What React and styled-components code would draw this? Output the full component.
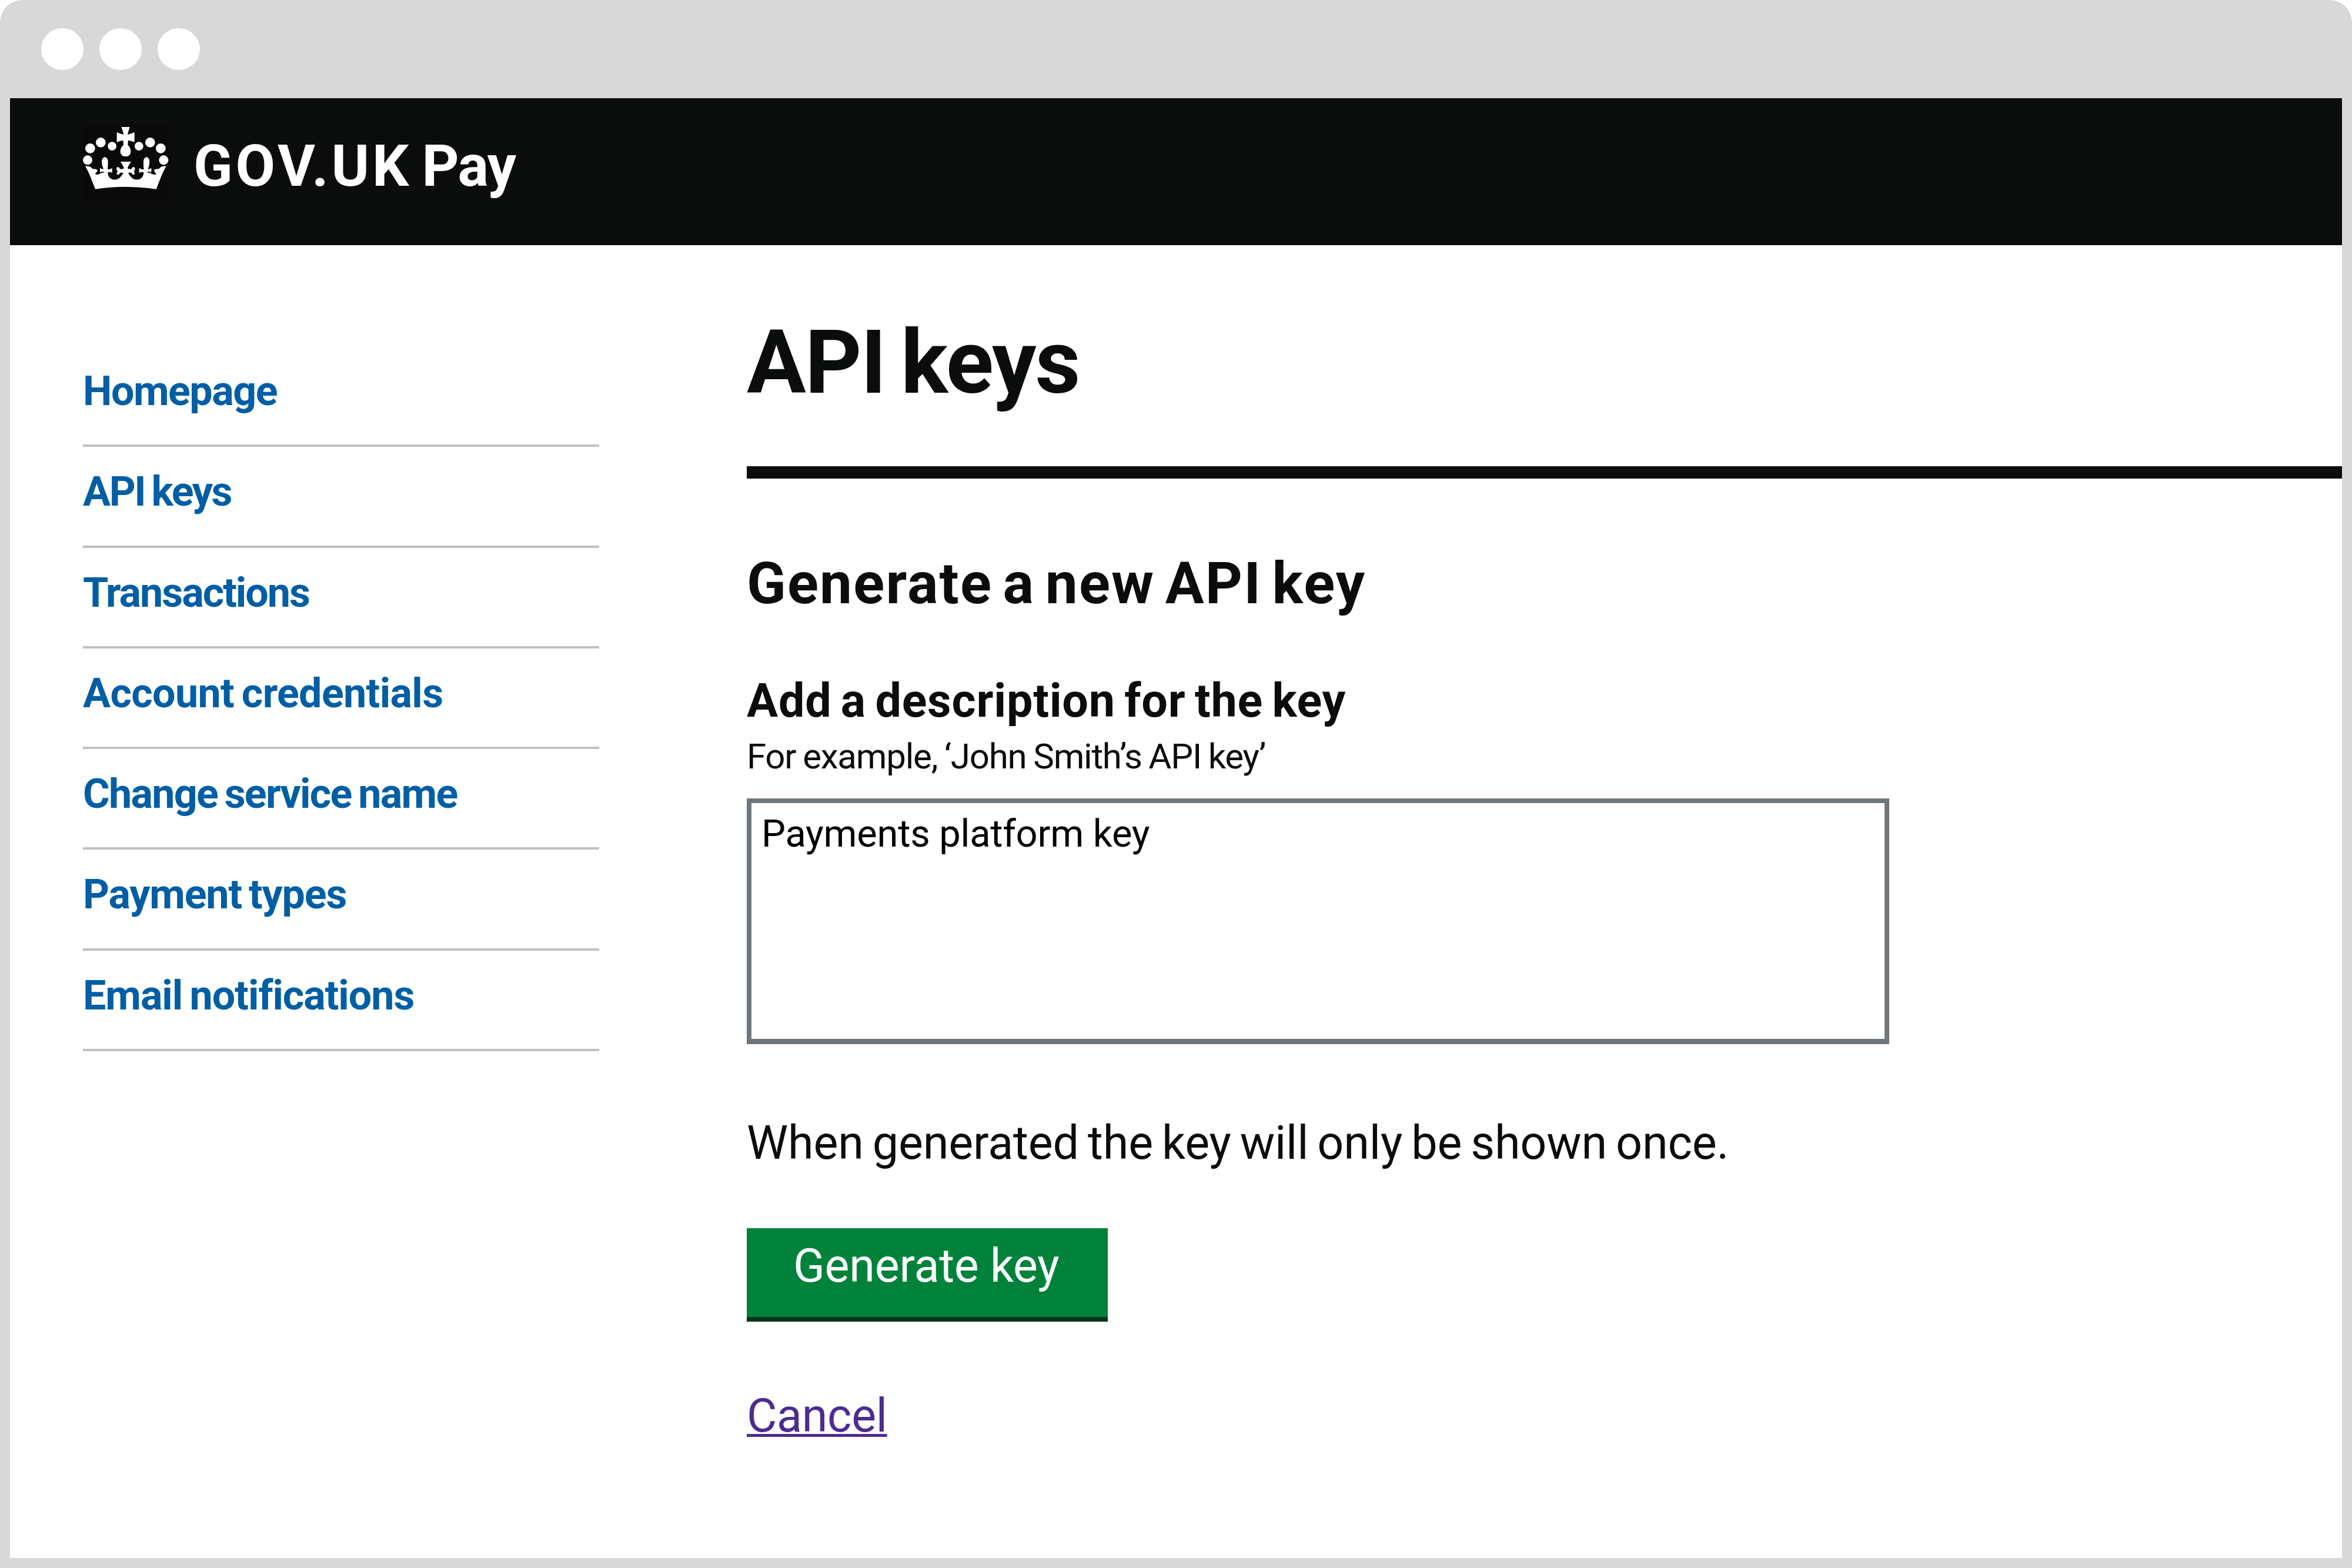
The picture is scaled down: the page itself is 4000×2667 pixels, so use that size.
import React from 'react';
import styled, { createGlobalStyle } from 'styled-components';

const ink = '#0b0c0c';

const GlobalStyle = createGlobalStyle`
  *, *::before, *::after { box-sizing: border-box; }
  body {
    margin: 0;
    background: #fff;
    color: ${ink};
    font-family: Roboto, "Liberation Sans", sans-serif;
    font-kerning: normal;
  }
  h1, h2, p, ul { margin: 0; padding: 0; }
`;

const Window = styled.div`
  display: flex;
  flex-direction: column;
  width: 4000px;
  height: 2667px;
  padding: 0 17px 17px;
  background: #d8d8d8;
  border-radius: 38px 38px 0 0;
  overflow: hidden;
`;

const TitleBar = styled.div`
  display: flex;
  gap: 27.5px;
  flex: none;
  height: 167px;
  padding: 47.5px 0 0 53px;
`;

const Dot = styled.span`
  width: 71.5px;
  height: 71.5px;
  border-radius: 50%;
  background: #fff;
`;

const Header = styled.header`
  display: flex;
  align-items: flex-start;
  gap: 42px;
  flex: none;
  height: 250px;
  padding: 45px 124px 0;
  background: ${ink};
`;

const CrownSvg = styled.svg`
  display: block;
  width: 146px;
  height: 130px;
  background: #0a0a0a;
`;

const ServiceName = styled.div`
  margin-top: 22px;
  font-size: 98px;
  line-height: 98px;
  font-weight: 700;
  word-spacing: -7px;
  white-space: nowrap;
  color: #fff;
`;

const Logotype = styled.span`
  letter-spacing: 4.8px;
`;

const ProductName = styled.span`
  letter-spacing: -1.5px;
`;

const Body = styled.div`
  display: flex;
  gap: 251px;
  flex: 1;
  padding-left: 124px;
  background: #fff;
`;

const NavList = styled.ul`
  flex: none;
  width: 878px;
  padding-top: 172px;
  list-style: none;
`;

const NavItem = styled.li`
  height: 171.3px;
  padding-top: 41px;
  border-bottom: 4px solid #bfc1c3;
`;

const NavLink = styled.a`
  display: block;
  font-size: 70px;
  line-height: 70px;
  font-weight: 700;
  letter-spacing: ${(p) => p.$tracking}px;
  word-spacing: -4px;
  white-space: nowrap;
  color: #005ea5;
  text-decoration: none;
`;

const Main = styled.main`
  flex: 1;
  display: flex;
  flex-direction: column;
  align-items: flex-start;
`;

const PageTitle = styled.h1`
  align-self: stretch;
  padding: 125px 0 101px;
  border-bottom: 21px solid ${ink};
  font-size: 150px;
  line-height: 150px;
  font-weight: 700;
  letter-spacing: -1.9px;
  word-spacing: -9px;
`;

const SectionTitle = styled.h2`
  margin-top: 130px;
  font-size: 98px;
  line-height: 98px;
  font-weight: 700;
  letter-spacing: 2.2px;
  word-spacing: -9px;
`;

const Label = styled.label`
  margin-top: 111px;
  font-size: 79px;
  line-height: 79px;
  font-weight: 700;
  letter-spacing: 0.8px;
  word-spacing: -5px;
`;

const Hint = styled.span`
  margin-top: 25px;
  font-size: 60px;
  line-height: 60px;
  letter-spacing: -1.2px;
  word-spacing: -2px;
`;

const Description = styled.textarea`
  display: block;
  width: 1943px;
  height: 418px;
  margin: 41px 0 0;
  padding: 20px 17px;
  border: 8px solid #6f777b;
  border-bottom-width: 9px;
  border-radius: 0;
  outline: none;
  resize: none;
  background: #fff;
  color: #000;
  font: 400 65px/65px Roboto, "Liberation Sans", sans-serif;
  letter-spacing: -0.25px;
`;

const Note = styled.p`
  margin-top: 129px;
  font-size: 79px;
  line-height: 79px;
  letter-spacing: -0.1px;
  word-spacing: -4.5px;
`;

const SubmitButton = styled.button`
  width: 614px;
  height: 159px;
  margin: 105px 0 0;
  padding: 25px 0 47px 79px;
  border: 0;
  border-bottom: 8px solid #003618;
  background: #00823b;
  color: #fff;
  font: 400 79px/79px Roboto, "Liberation Sans", sans-serif;
  letter-spacing: -0.2px;
  text-align: left;
  white-space: nowrap;
`;

const CancelLink = styled.a`
  margin-top: 121px;
  font-size: 79px;
  line-height: 79px;
  letter-spacing: -0.3px;
  color: #4c2c92;
  text-decoration: underline;
  text-decoration-thickness: 5px;
  text-underline-offset: 4px;
  text-decoration-skip-ink: none;
`;

const navItems = [
  { label: 'Homepage', tracking: -1.5 },
  { label: 'API keys', tracking: -2.4 },
  { label: 'Transactions', tracking: -2 },
  { label: 'Account credentials', tracking: -0.65 },
  { label: 'Change service name', tracking: -1.75 },
  { label: 'Payment types', tracking: -1.2 },
  { label: 'Email notifications', tracking: -1.05 },
];

const jewels = [
  [88, 247, 24], [101, 187, 25], [155, 157, 25], [213, 176, 22],
  [350, 176, 22], [407, 157, 25], [461, 187, 25], [476, 247, 24],
];

const Crown = () => (
  <CrownSvg viewBox="64 66 438 390" fill="#fff" aria-hidden="true">
    {jewels.map(([cx, cy, r]) => (
      <circle key={cx} cx={cx} cy={cy} r={r} />
    ))}
    {/* orb and cross */}
    <path d="M260 78 H303 Q296 98 292 117 Q312 112 327 105 V155 Q312 149 295 146 Q293 160 293 170 Q308 182 308 204 Q308 227 282 229 Q255 227 255 204 Q255 182 271 170 Q271 160 269 146 Q252 149 237 155 V105 Q252 112 272 117 Q268 98 260 78 Z" />
    {/* circlet with its side leaves, fleurs-de-lis and centre cross */}
    <path d="M76 278 Q104 276 113 292 Q128 290 139 298 Q136 310 126 317 Q136 324 150 317 Q164 309 176 311 Q162 300 151 311 V287 Q164 295 169 293 Q160 275 160 255 Q161 234 176 231 Q191 234 192 255 Q192 275 190 293 Q202 296 213 287 V312 Q202 303 190 311 Q194 334 206 341 Q225 352 246 341 Q259 334 270 313 Q258 307 251 315 Q247 326 238 319 Q234 313 242 304 Q232 300 237 284 Q247 278 253 291 Q262 296 274 289 Q268 270 255 255 H310 Q297 270 291 289 Q303 296 312 291 Q318 278 328 284 Q333 300 323 304 Q331 313 327 319 Q318 326 314 315 Q307 307 295 313 Q306 334 319 341 Q340 352 359 341 Q371 334 375 311 Q363 303 351 312 V287 Q363 296 375 293 Q372 275 373 255 Q374 234 389 231 Q403 234 404 255 Q404 275 396 293 Q401 295 413 287 V311 Q402 300 389 311 Q401 309 415 317 Q429 324 439 317 Q429 310 426 298 Q437 290 452 292 Q461 276 489 278 Q473 305 462 334 L438 395 Q282 372 127 395 L103 334 Q92 305 76 278 Z" />
  </CrownSvg>
);

export default function App() {
  return (
    <>
      <GlobalStyle />
      <Window>
        <TitleBar>
          <Dot />
          <Dot />
          <Dot />
        </TitleBar>
        <Header>
          <Crown />
          <ServiceName>
            <Logotype>GOV.UK</Logotype> <ProductName>Pay</ProductName>
          </ServiceName>
        </Header>
        <Body>
          <NavList>
            {navItems.map((item) => (
              <NavItem key={item.label}>
                <NavLink href="#" $tracking={item.tracking}>{item.label}</NavLink>
              </NavItem>
            ))}
          </NavList>
          <Main>
            <PageTitle>API keys</PageTitle>
            <SectionTitle>Generate a new API key</SectionTitle>
            <Label htmlFor="description">Add a description for the key</Label>
            <Hint>For example, ‘John Smith’s API key’</Hint>
            <Description id="description" defaultValue="Payments platform key" spellCheck={false} />
            <Note>When generated the key will only be shown once.</Note>
            <SubmitButton type="button">Generate key</SubmitButton>
            <CancelLink href="#">Cancel</CancelLink>
          </Main>
        </Body>
      </Window>
    </>
  );
}
